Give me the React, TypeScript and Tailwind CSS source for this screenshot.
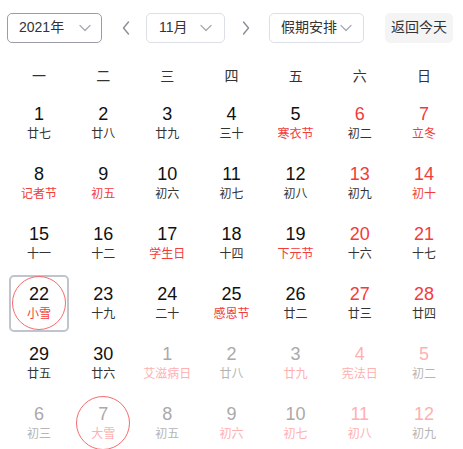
import React from "react";

type Day = { n: number; l: string; lr: boolean; other?: boolean; we?: boolean; today?: boolean; sel?: boolean };

const D = (n: number, l: string, lr: boolean, we = false, other = false, extra: Partial<Day> = {}): Day => ({ n, l, lr, we, other, ...extra });

const rows: Day[][] = [
  [D(1, "廿七", false), D(2, "廿八", false), D(3, "廿九", false), D(4, "三十", false), D(5, "寒衣节", true), D(6, "初二", false, true), D(7, "立冬", true, true)],
  [D(8, "记者节", true), D(9, "初五", true), D(10, "初六", false), D(11, "初七", false), D(12, "初八", false), D(13, "初九", false, true), D(14, "初十", true, true)],
  [D(15, "十一", false), D(16, "十二", false), D(17, "学生日", true), D(18, "十四", false), D(19, "下元节", true), D(20, "十六", false, true), D(21, "十七", false, true)],
  [D(22, "小雪", true, false, false, { today: true }), D(23, "十九", false), D(24, "二十", false), D(25, "感恩节", true), D(26, "廿二", false), D(27, "廿三", false, true), D(28, "廿四", false, true)],
  [D(29, "廿五", false), D(30, "廿六", false), D(1, "艾滋病日", true, false, true), D(2, "廿八", false, false, true), D(3, "廿九", true, false, true), D(4, "宪法日", true, true, true), D(5, "初二", false, true, true)],
  [D(6, "初三", false, false, true), D(7, "大雪", true, false, true, { sel: true }), D(8, "初五", false, false, true), D(9, "初六", true, false, true), D(10, "初七", true, false, true), D(11, "初八", true, true, true), D(12, "初九", false, true, true)],
];

const Chevron = () => (
  <svg width="14" height="14" viewBox="0 0 14 14" fill="none">
    <path d="M2 4.5 L7 9.5 L12 4.5" stroke="#a8abb2" strokeWidth="1.3" strokeLinecap="round" strokeLinejoin="round" />
  </svg>
);

const Arrow = ({ dir }: { dir: "l" | "r" }) => (
  <svg width="10" height="16" viewBox="0 0 10 16" fill="none">
    {dir === "l" ? (
      <path d="M7.5 2 L2.5 8 L7.5 14" stroke="#8a8d94" strokeWidth="1.4" strokeLinecap="round" strokeLinejoin="round" />
    ) : (
      <path d="M2.5 2 L7.5 8 L2.5 14" stroke="#8a8d94" strokeWidth="1.4" strokeLinecap="round" strokeLinejoin="round" />
    )}
  </svg>
);

function Cell({ d }: { d: Day }) {
  let numColor = "text-[#111]";
  if (d.other) numColor = d.we ? "text-[#ffb0b0]" : "text-[#aaaaaa]";
  else if (d.we) numColor = "text-[#f33b3b]";
  let lunColor = "text-[#333]";
  if (d.other) lunColor = d.lr ? "text-[#ffb0b0]" : "text-[#b5b5b5]";
  else if (d.lr) lunColor = "text-[#f33b3b]";

  const inner = (
    <div
      className={
        "w-[54px] h-[54px] rounded-full flex flex-col items-center justify-center " +
        (d.today || d.sel ? "border border-[#f56c6c]" : "border border-transparent")
      }
    >
      <div className={"text-[18px] leading-[20px] " + numColor}>{d.n}</div>
      <div className={"text-[12px] leading-[16px] mt-[2px] " + lunColor}>{d.l}</div>
    </div>
  );

  return (
    <div className="h-[60px] flex items-center justify-center">
      {d.today ? (
        <div className="w-[60px] h-[57px] border-2 border-[#c0c4cc] rounded-[5px] flex items-center justify-center">{inner}</div>
      ) : (
        inner
      )}
    </div>
  );
}

export default function App() {
  return (
    <div
      className="w-[463px] h-[449px] bg-white overflow-hidden px-[7px] pt-[13px]"
      style={{ fontFamily: '"Liberation Sans", "Noto Sans CJK SC", sans-serif' }}
    >
      <div className="flex items-center h-[29px] text-[14px] text-[#333]">
        <div className="w-[95px] h-[30px] border border-[#9c9ca8] rounded-[5px] flex items-center justify-between pl-[11px] pr-[9px]">
          <span>2021年</span>
          <Chevron />
        </div>
        <div className="w-[44px] flex items-center justify-center pl-[4px]">
          <Arrow dir="l" />
        </div>
        <div className="w-[79px] h-[30px] border border-[#dcdfe6] rounded-[5px] flex items-center justify-between pl-[12px] pr-[11px]">
          <span>11月</span>
          <Chevron />
        </div>
        <div className="w-[44px] flex items-center justify-center pr-[2px]">
          <Arrow dir="r" />
        </div>
        <div className="w-[95px] h-[30px] border border-[#dcdfe6] rounded-[5px] flex items-center justify-between pl-[11px] pr-[10px]">
          <span>假期安排</span>
          <Chevron />
        </div>
        <div className="ml-[21px] w-[68px] h-[30px] bg-[#f4f4f5] rounded-[5px] flex items-center justify-center">返回今天</div>
      </div>
      <div className="grid grid-cols-7 mt-[18px] h-[33px] items-center text-[14px] text-[#333]">
        {["一", "二", "三", "四", "五", "六", "日"].map((w) => (
          <div key={w} className="text-center">{w}</div>
        ))}
      </div>
      {rows.map((r, i) => (
        <div key={i} className="grid grid-cols-7">
          {r.map((d, j) => (
            <Cell key={j} d={d} />
          ))}
        </div>
      ))}
    </div>
  );
}
